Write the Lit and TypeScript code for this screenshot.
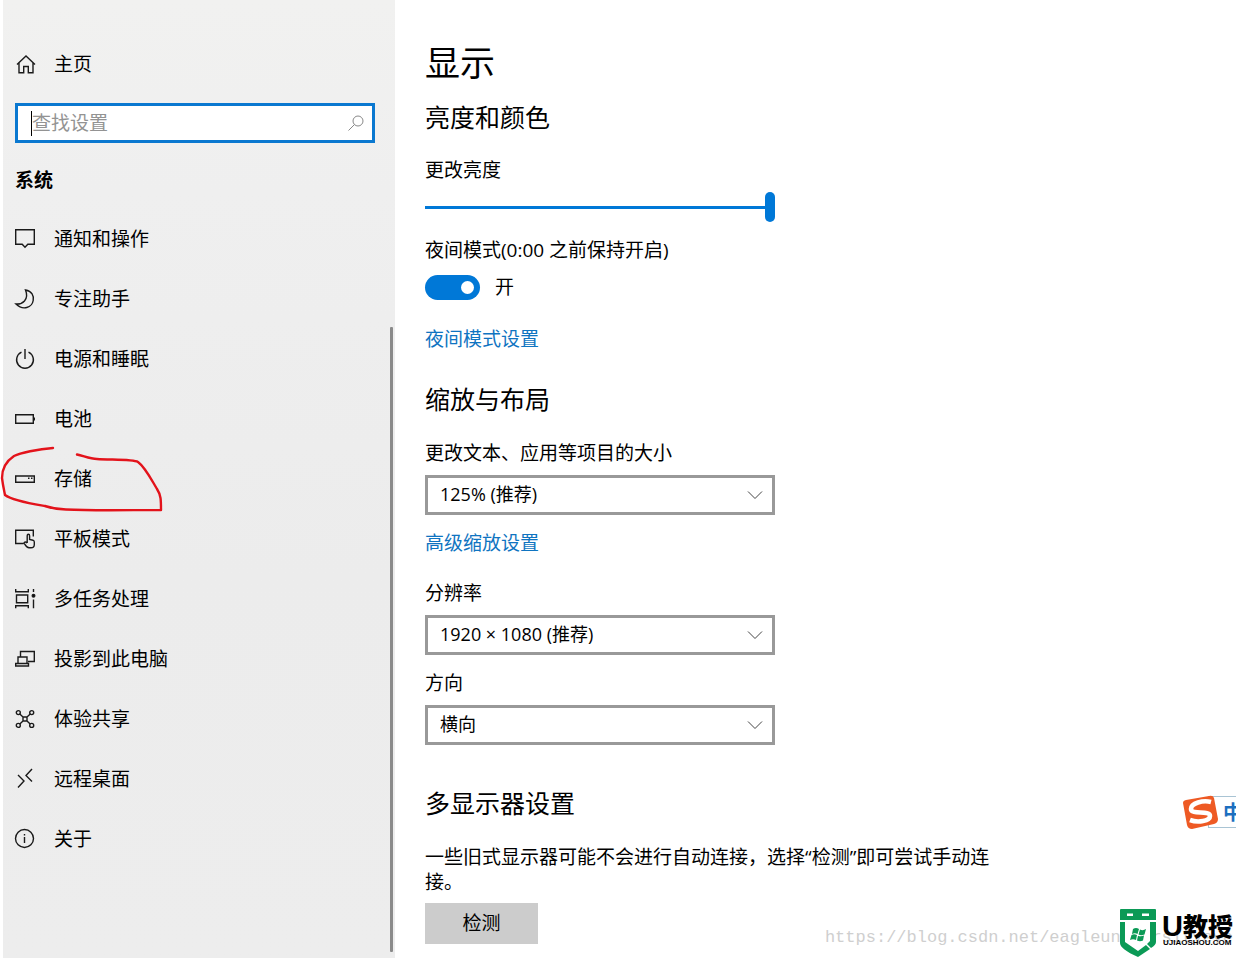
import { LitElement, html, css, svg, type SVGTemplateResult } from "lit";
import { customElement, state } from "lit/decorators.js";

interface NavItem {
  label: string;
  icon: SVGTemplateResult;
}

const NAV: NavItem[] = [
  {
    label: "通知和操作",
    icon: svg`<path d="M.7 .7H19.3V15.3H12.8L10 18.3L7.2 15.3H.7Z"/>`,
  },
  {
    label: "专注助手",
    icon: svg`<path d="M10.5 1C17 2 19 7 18.2 11.5C17 18.5 8 22 1 15C7 15.5 14.5 11 10.5 1Z"/>`,
  },
  {
    label: "电源和睡眠",
    icon: svg`<path d="M6.5 3.2A8.4 8.4 0 1 0 13.5 3.2M10 0V10"/>`,
  },
  {
    label: "电池",
    icon: svg`<path d="M.7 5.7H18.3V14.3H.7ZM19.3 8.5V11.5"/>`,
  },
  {
    label: "存储",
    icon: svg`<path d="M.7 7H19.3V13.3H.7ZM13 9.3H14.5M16 9.3H17.5"/>`,
  },
  {
    label: "平板模式",
    icon: svg`<path d="M8.5 14.5H.7V1.2H18.3V7.5M12.2 14V6.7C12.2 4.8 14.6 4.8 14.6 6.7V10.5L18 11.2C19 11.5 19.3 12 19.3 13V15.5C19.3 17.5 17.8 18.8 16 18.8H14C11.5 18.8 10.8 17 9.2 14.3C8.8 13.2 10.3 12.3 12.2 14"/>`,
  },
  {
    label: "多任务处理",
    icon: svg`<path d="M.7 0V2.7H13.3V0M1.5 6H12.7V13.7H1.5ZM.7 19.3V16.7H13.3V19.3M18.5 0V3M18.5 10.5V19.3"/><circle cx="18.5" cy="6.8" r="1.3" fill="currentColor"/>`,
  },
  {
    label: "投影到此电脑",
    icon: svg`<path d="M5.5 8V2.5H19.3V12.5H13M3 14.5V8H12V14.5M.7 14.5H13.5V17H.7Z"/>`,
  },
  {
    label: "体验共享",
    icon: svg`<circle cx="3.3" cy="3.6" r="2"/><circle cx="16.7" cy="3.6" r="2"/><circle cx="3.3" cy="16.4" r="2"/><circle cx="16.7" cy="16.4" r="2"/><path d="M8 8H12V12H8ZM4.8 5L8 8M15.2 5L12 8M4.8 15L8 12M15.2 15L12 12"/>`,
  },
  {
    label: "远程桌面",
    icon: svg`<path d="M3 6L9 12L3 18.5M17 0L11 6.5L17 12.5"/>`,
  },
  {
    label: "关于",
    icon: svg`<circle cx="9.5" cy="9.5" r="9"/><path d="M9.5 8V14M9.5 5V6.5"/>`,
  },
];

@customElement("app-root")
export class AppRoot extends LitElement {
  @state() private nightMode = true;

  static styles = css`
    :host {
      display: block;
      font-family: "Open Sans", "Noto Sans CJK SC", sans-serif;
      font-size: 19px;
      line-height: 25px;
      color: #000;
      background: #fff;
    }
    * {
      box-sizing: border-box;
    }
    h1,
    h2,
    p {
      margin: 0;
      font-weight: 400;
    }
    input,
    select,
    button {
      font: inherit;
      color: inherit;
      margin: 0;
      border-radius: 0;
    }
    .page {
      position: relative;
      display: grid;
      grid-template-columns: 392px 1fr;
      min-height: 100vh;
      padding-left: 3px;
      overflow: hidden;
    }
    .sidebar {
      position: relative;
      padding: 34px 20px 0 12px;
      background: linear-gradient(#f1f1f0, #efefef 20%, #ececec 60%, #ededed);
    }
    .entry {
      display: flex;
      align-items: center;
      gap: 19px;
      height: 60px;
      color: inherit;
      text-decoration: none;
    }
    .icon {
      width: 20px;
      height: 20px;
      flex: none;
      overflow: visible;
      fill: none;
      stroke: #1a1a1a;
      stroke-width: 1.4;
    }
    .search {
      display: flex;
      align-items: center;
      height: 40px;
      margin: 9px 0 25px;
      padding: 0 8px 0 13px;
      border: 3px solid #0a78d0;
      background: #fff;
    }
    .caret {
      width: 1px;
      height: 25px;
      background: #000;
    }
    .query {
      flex: 1;
      min-width: 0;
      height: 30px;
      padding: 0;
      border: 0;
      outline: 0;
      background: none;
    }
    .query::placeholder {
      color: #939393;
      opacity: 1;
    }
    .lens {
      width: 16px;
      height: 16px;
      fill: none;
      stroke: #888;
      stroke-width: 1;
    }
    .group {
      font-size: 19px;
      font-weight: 700;
      margin-bottom: 16px;
    }
    .home {
      margin: 0;
    }
    .scroll {
      position: absolute;
      right: 2px;
      top: 327px;
      bottom: 6px;
      width: 3px;
      border-radius: 1px;
      background: #8a8a8a;
    }
    .mark {
      position: absolute;
      left: 0;
      top: 444px;
      width: 166px;
      height: 70px;
      fill: none;
      stroke: #e3131b;
      stroke-width: 2.4;
      stroke-linecap: round;
      stroke-linejoin: round;
      pointer-events: none;
    }
    .main {
      padding: 39px 30px 14px;
    }
    .title {
      font-size: 35px;
      line-height: 47px;
    }
    .section {
      font-size: 25px;
      line-height: 33px;
      margin: 31px 0 25px;
    }
    .title + .section {
      margin: 15px 0 24px;
    }
    .section.last {
      margin-top: 42px;
    }
    .label {
      display: block;
      margin-bottom: 9px;
    }
    .control {
      display: grid;
      max-width: 350px;
      align-items: center;
      margin-bottom: 16px;
    }
    .slider {
      display: block;
      appearance: none;
      width: 100%;
      max-width: 350px;
      height: 30px;
      margin-bottom: 16px;
      background: linear-gradient(#0078d7, #0078d7) center / 100% 3px no-repeat;
    }
    .slider::-webkit-slider-thumb {
      appearance: none;
      width: 10px;
      height: 30px;
      border-radius: 5px;
      background: #0078d7;
    }
    .switch {
      display: flex;
      align-items: center;
      gap: 15px;
      margin: 12px 0 27px;
    }
    .toggle {
      appearance: none;
      display: flex;
      align-items: center;
      justify-content: flex-end;
      width: 55px;
      height: 25px;
      padding: 0 6px;
      border-radius: 13px;
      background: #0078d7;
    }
    .toggle::after {
      content: "";
      width: 13px;
      height: 13px;
      border-radius: 50%;
      background: #fff;
    }
    .toggle:not(:checked) {
      justify-content: flex-start;
      background: #999;
    }
    .link {
      display: table;
      color: #0f74c1;
      text-decoration: none;
    }
    .control + .link {
      margin-bottom: 25px;
    }
    .select {
      grid-area: 1 / 1;
      appearance: none;
      width: 100%;
      height: 40px;
      padding: 0 40px 2px 12px;
      border: 3px solid #999;
      background: #fff;
      font-size: 18px;
    }
    .chevron {
      grid-area: 1 / 1;
      justify-self: end;
      width: 16px;
      height: 10px;
      margin-right: 12px;
      fill: none;
      stroke: #444;
      stroke-width: 1;
      pointer-events: none;
    }
    .note {
      max-width: 566px;
      margin-bottom: 8px;
    }
    .detect {
      width: 113px;
      height: 41px;
      padding: 0;
      border: 0;
      background: #ccc;
    }
    .ime {
      position: absolute;
      right: 0;
      top: 793px;
      display: flex;
      align-items: center;
      width: 54px;
      height: 38px;
      overflow: hidden;
    }
    .sogou {
      position: relative;
      width: 38px;
      height: 38px;
      flex: none;
    }
    .mode {
      flex: none;
      height: 32px;
      margin-left: -12px;
      padding-left: 14px;
      border: 1px solid #a9c4d4;
      font-size: 20px;
      line-height: 32px;
      font-weight: 700;
      color: #1c6fc0;
    }
    .watermark {
      position: absolute;
      right: 3px;
      bottom: 8px;
      font-family: "Liberation Mono", monospace;
      font-size: 17px;
      color: #cfcfcf;
      white-space: nowrap;
    }
    .brand {
      position: absolute;
      right: 2px;
      bottom: 0;
      display: flex;
      gap: 5px;
      height: 50px;
    }
    .shield {
      width: 38px;
      height: 50px;
    }
    .words {
      display: flex;
      flex-direction: column;
      min-width: 72px;
      padding-top: 6px;
      font-weight: 900;
    }
    .name {
      display: flex;
      align-items: center;
      font-size: 25px;
      line-height: 24px;
      height: 24px;
    }
    .initial {
      font-family: "Liberation Sans", sans-serif;
      font-size: 29px;
    }
    .site {
      font-family: "Liberation Sans", sans-serif;
      font-size: 8px;
      line-height: 9px;
      font-weight: 700;
      padding-left: 1px;
    }
  `;

  private dropdown(id: string, label: string, value: string) {
    return html`
      <label class="label" for=${id}>${label}</label>
      <div class="control">
        <select class="select" id=${id}>
          <option>${value}</option>
        </select>
        <svg class="chevron" viewBox="0 0 16 10"><path d="M1 1.5L8 8.5L15 1.5" /></svg>
      </div>
    `;
  }

  render() {
    return html`
      <div class="page">
        <nav class="sidebar">
          <a class="entry home" href="#">
            <svg class="icon" viewBox="0 0 20 20">
              <path d="M2 10.500L11 2L20 10.500M4 9V18.800H8.700V12.500H13.300V18.800H18V9" />
            </svg>
            <span>主页</span>
          </a>
          <div class="search">
            <span class="caret"></span>
            <input class="query" type="text" placeholder="查找设置" aria-label="查找设置" />
            <svg class="lens" viewBox="0 0 16 16">
              <circle cx="10" cy="6" r="5" /><path d="M6.5 9.5L.5 15.5" />
            </svg>
          </div>
          <h2 class="group">系统</h2>
          ${NAV.map(
            (item) => html`
              <a class="entry" href="#">
                <svg class="icon" viewBox="0 0 20 20">${item.icon}</svg>
                <span>${item.label}</span>
              </a>
            `,
          )}
          <div class="scroll"></div>
        </nav>

        <main class="main">
          <h1 class="title">显示</h1>
          <h2 class="section">亮度和颜色</h2>
          <label class="label" for="brightness">更改亮度</label>
          <input class="slider" id="brightness" type="range" min="0" max="100" value="100" />
          <span id="night-label">夜间模式(0:00 之前保持开启)</span>
          <label class="switch">
            <input
              class="toggle"
              type="checkbox"
              role="switch"
              aria-describedby="night-label"
              .checked=${this.nightMode}
              @change=${(e: Event) => (this.nightMode = (e.target as HTMLInputElement).checked)}
            />
            <span>${this.nightMode ? "开" : "关"}</span>
          </label>
          <a class="link" href="#">夜间模式设置</a>

          <h2 class="section">缩放与布局</h2>
          ${this.dropdown("scale", "更改文本、应用等项目的大小", "125% (推荐)")}
          <a class="link" href="#">高级缩放设置</a>
          ${this.dropdown("resolution", "分辨率", "1920 × 1080 (推荐)")}
          ${this.dropdown("orientation", "方向", "横向")}

          <h2 class="section last">多显示器设置</h2>
          <p class="note">一些旧式显示器可能不会进行自动连接，选择“检测”即可尝试手动连接。</p>
          <button class="detect" type="button">检测</button>
        </main>

        <svg class="mark" viewBox="0 0 166 70">
          <path
            d="M53 4C38 5 20 9 14 12C5 18 2 25 2 34C3 42 4 46 5 51C13 57 33 60 45 62C51 64 55 65.500 66 65.500C95 67 130 66 161 66C161 56 161 51 157 45C151 35 145 23 138 18C133 15 110 16 97 15C90 15 84 12 77 10.500"
          />
        </svg>

        <div class="ime">
          <svg class="sogou" viewBox="0 0 38 38">
            <path
              d="M4 7Q1 7.500 1 10L5 32Q6 36 10 36L32 31Q36 30 36 26L32 5Q31 2 27 3Z"
              fill="#ee5a24"
            />
            <path
              d="M29 9C21 7 9 10 9 16C9 22 28 17 28 23C28 28 16 30 8 27"
              fill="none"
              stroke="#fff"
              stroke-width="4.600"
            />
          </svg>
          <span class="mode">中</span>
        </div>

        <div class="watermark">https://blog.csdn.net/eagleuniversityeye</div>
        <div class="brand">
          <svg class="shield" viewBox="0 0 38 50">
            <path d="M1 14H37V38L19 49L1 38Z" fill="#fff" />
            <path d="M1 2Q1 1 2 1H36Q37 1 37 2V12H1Z" fill="#0b9a56" />
            <path d="M8 5.500H14V8H8ZM23 5.500H30V8H23Z" fill="#fff" />
            <path
              d="M1 14H6V34L19 43L27 37L31 41L19 49Q1 41 1 35ZM37 14H31V33L28 36L32 40Q37 37 37 34Z"
              fill="#0b9a56"
            />
            <path
              d="M14 21Q17 19 20 21L18.500 26Q16 24.500 13 26ZM21 21.500Q24 23 27 21L25.500 26.500Q22 28 19.500 26.500ZM12.500 27Q15 25.500 18 27L17 32Q14 30.500 11 32ZM19 27.800Q22 29 25 27.500L24 32.500Q21 34 18 32.500Z"
              fill="#0b9a56"
            />
          </svg>
          <div class="words">
            <div class="name"><span class="initial">U</span><span>教授</span></div>
            <div class="site">UJIAOSHOU.COM</div>
          </div>
        </div>
      </div>
    `;
  }
}
